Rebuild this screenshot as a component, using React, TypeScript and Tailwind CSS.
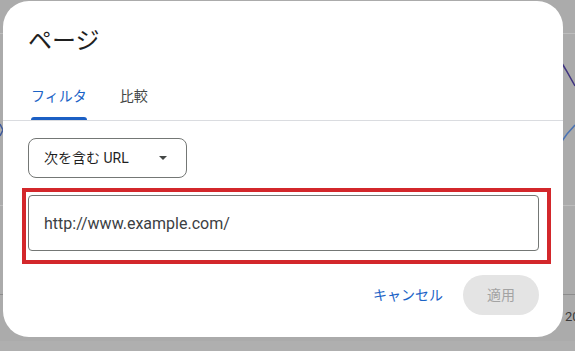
import React, { useState } from 'react';

const font = { fontFamily: 'Roboto, "Noto Sans CJK JP", sans-serif' };

function ChartBackdrop() {
  return (
    <svg className="absolute inset-0 h-full w-full" viewBox="0 0 575 351" aria-hidden="true">
      <line x1="0" y1="33.5" x2="575" y2="33.5" stroke="#bdbdbd" strokeWidth="1" />
      <line x1="0" y1="205.5" x2="575" y2="205.5" stroke="#bdbdbd" strokeWidth="1" />
      <line x1="0" y1="294.5" x2="575" y2="294.5" stroke="#8c8c8c" strokeWidth="1" />
      <polyline points="560,60 566,70 575,86" fill="none" stroke="#3f3380" strokeWidth="1.5" />
      <polyline points="560,144 567,134 575,125" fill="none" stroke="#4b73b3" strokeWidth="1.5" />
      <polyline points="0,124 3,130 0,136" fill="none" stroke="#3f5a9a" strokeWidth="1.5" />
      <rect x="0" y="341" width="575" height="10" fill="#afafaf" />
    </svg>
  );
}

function Tabs() {
  const [active, setActive] = useState('filter');
  const tabs = [
    { id: 'filter', label: 'フィルタ' },
    { id: 'compare', label: '比較' },
  ];

  return (
    <div className="mt-[15px] flex gap-[33px] border-b border-[#dadce0] pl-[28px]">
      {tabs.map((t) => (
        <button
          key={t.id}
          onClick={() => setActive(t.id)}
          className={`relative flex h-[48px] items-center text-[14px] ${
            active === t.id ? 'text-[#1b63c6]' : 'text-[#444746]'
          }`}
        >
          {t.label}
          {active === t.id && (
            <span className="absolute bottom-0 left-0 right-0 h-[3px] rounded-t-[3px] bg-[#1b5fc4]" />
          )}
        </button>
      ))}
    </div>
  );
}

export default function App() {
  const [url, setUrl] = useState('http://www.example.com/');

  return (
    <div className="relative h-[351px] w-[575px] overflow-hidden bg-[#ababab]" style={font}>
      <ChartBackdrop />
      <span className="absolute left-[565px] top-[307px] text-[13px] text-[#3a3a3a]">20</span>

      <div className="relative z-10 ml-[3px] mt-[1px] flex h-[336px] w-[560px] flex-col rounded-[26px] bg-white">
        <h2 className="pl-[25px] pt-[24px] text-[24px] leading-[32px] text-[#1f1f1f]">ページ</h2>

        <Tabs />

        <div className="flex flex-col px-[25px] pr-[24px]">
          <button className="mt-[17px] flex h-[40px] w-[159px] items-center justify-between rounded-[8px] border border-[#747775] pl-[15px] pr-[19px] text-[14px] text-[#1f1f1f]">
            <span>次を含む URL</span>
            <span className="h-0 w-0 border-x-[4.5px] border-t-[4.5px] border-x-transparent border-t-[#444746]" />
          </button>

          <div className="relative mt-[17px]">
            <input
              value={url}
              onChange={(e) => setUrl(e.target.value)}
              className="h-[56px] w-full rounded-[4px] border border-[#747775] px-[15px] text-[16px] text-[#3c4043] outline-none"
              style={font}
            />
            <div className="pointer-events-none absolute -left-[6px] -right-[12px] -top-[7px] -bottom-[13px] border-[4px] border-[#d3272b]" />
          </div>

          <div className="mt-[24px] flex items-center justify-end gap-[8px]">
            <button className="h-[40px] px-[12px] text-[14px] text-[#1b63c6]">キャンセル</button>
            <button disabled className="h-[40px] w-[76px] rounded-full bg-[#e4e4e4] text-[14px] text-[#a3a3a3]">
              適用
            </button>
          </div>
        </div>
      </div>
    </div>
  );
}
